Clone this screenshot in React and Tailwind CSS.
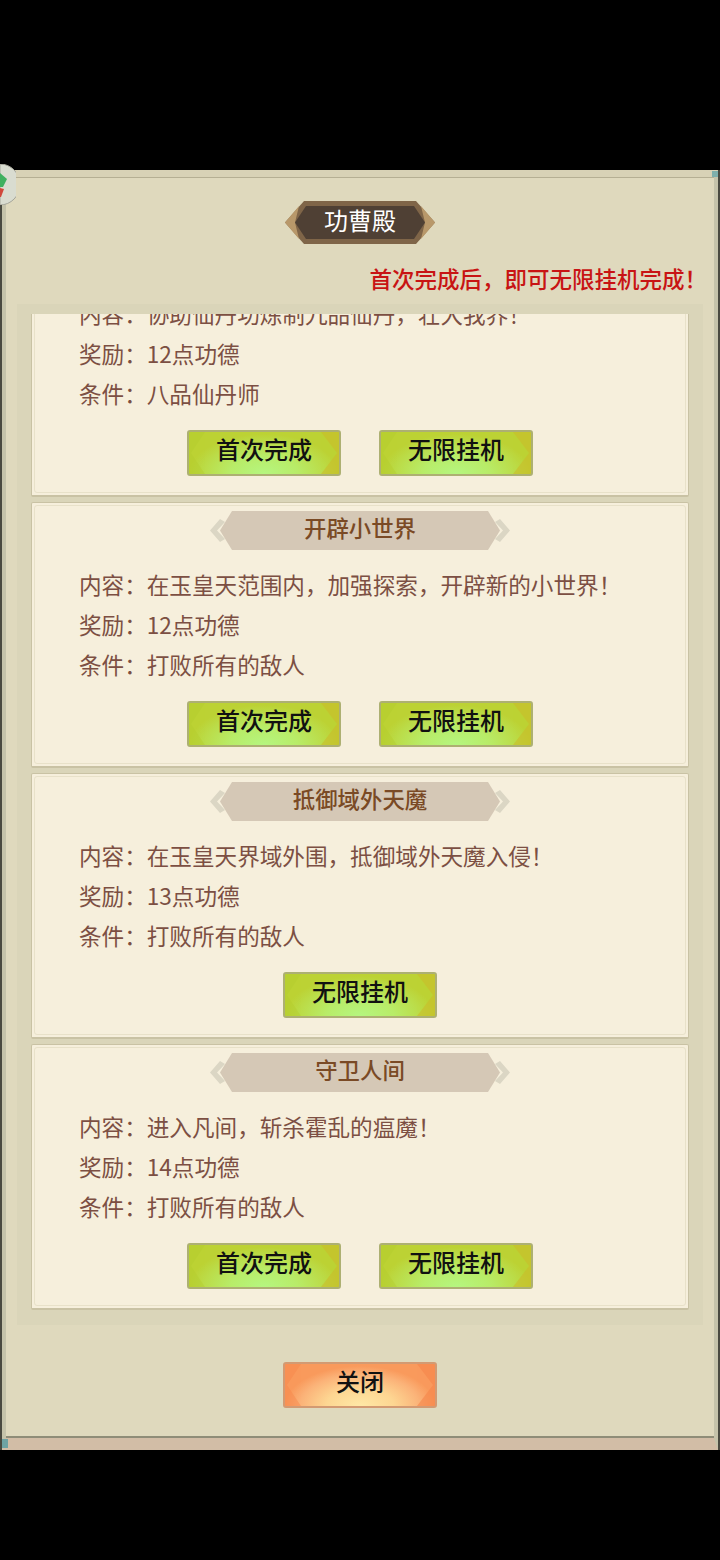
const cards = [
  {
    content: "协助仙丹功炼制九品仙丹，壮大我界！",
    reward: "12点功德",
    need: "八品仙丹师",
    first: true,
  },
  {
    title: "开辟小世界",
    content: "在玉皇天范围内，加强探索，开辟新的小世界！",
    reward: "12点功德",
    need: "打败所有的敌人",
    first: true,
  },
  {
    title: "抵御域外天魔",
    content: "在玉皇天界域外围，抵御域外天魔入侵！",
    reward: "13点功德",
    need: "打败所有的敌人",
    first: false,
  },
  {
    title: "守卫人间",
    content: "进入凡间，斩杀霍乱的瘟魔！",
    reward: "14点功德",
    need: "打败所有的敌人",
    first: true,
  },
];

const font = "font-['Noto_Sans_CJK_SC','Noto_Sans',sans-serif]";

function GameButton({ label, orange }) {
  return (
    <button
      className={`relative flex h-[46px] w-[154px] items-center justify-center overflow-hidden rounded-[3px] border-2 text-[24px] font-medium text-[#111] ${
        orange
          ? "border-[#d39a72] bg-[radial-gradient(ellipse_50%_95%_at_50%_100%,#ffe8a6_0%,#fdd692_45%,#fbb278_80%,#f99a5c_100%)]"
          : "border-[#adb072] bg-[radial-gradient(ellipse_50%_95%_at_50%_100%,#b5f680_0%,#b8ec68_45%,#bbdc48_80%,#bcd234_100%)]"
      }`}
    >
      {/* corner facets */}
      <svg className="absolute inset-0 h-full w-full" viewBox="0 0 150 42" preserveAspectRatio="none">
        <g fill={orange ? "#f6854a" : "#b4cd2e"} opacity="0.45">
          <polygon points="0,0 16,0 2,21 0,21" />
          <polygon points="0,42 16,42 2,21 0,21" />
        </g>
        <g fill={orange ? "#f6854a" : "#cabd2a"} opacity="0.6">
          <polygon points="150,0 132,0 148,21 150,21" />
          <polygon points="150,42 132,42 148,21 150,21" />
        </g>
      </svg>
      <span className="relative pb-[8px] leading-none">{label}</span>
    </button>
  );
}

function TitleBanner({ title }) {
  return (
    <div className="relative mx-auto flex h-[39px] w-[304px] items-center justify-center">
      <svg className="absolute inset-0 h-full w-full" viewBox="0 0 304 39">
        <polygon points="24,0 280,0 292,19.5 280,39 24,39 12,19.5" fill="#d5c8b6" />
        <path d="M12,8 L2,19.5 L12,31 L17,28 L9,19.5 L17,11 Z" fill="#dbd6c4" />
        <path d="M292,8 L302,19.5 L292,31 L287,28 L295,19.5 L287,11 Z" fill="#dbd6c4" />
      </svg>
      {title && (
        <span className="relative pb-[6px] text-[22.4px] leading-none font-medium text-[#7a4a25]">{title}</span>
      )}
    </div>
  );
}

function Card({ card }) {
  return (
    <div className="flex h-[266px] w-[658px] shrink-0 flex-col rounded-[2px] border border-b-2 border-[#c9c2a4] bg-[#f6efdc] p-[2px]">
      <div className="flex h-full flex-col rounded-[3px] border border-[#e8e1c9] pt-[5px]">
        <TitleBanner title={card.title} />
        <div className="mt-[19px] flex flex-col gap-[8px] pl-[44px] text-[22.6px] leading-[32px] text-[#7c4f43]">
          <p>内容：{card.content}</p>
          <p>奖励：{card.reward}</p>
          <p>条件：{card.need}</p>
        </div>
        <div className="mt-[20px] flex justify-center gap-[38px]">
          {card.first && <GameButton label="首次完成" />}
          <GameButton label="无限挂机" />
        </div>
      </div>
    </div>
  );
}

export default function App() {
  return (
    <div className={`flex h-[1560px] w-[720px] flex-col overflow-hidden bg-black pt-[170px] ${font}`}>
      <div className="border-x-2 border-x-[#4a4a40]">
        <div className="relative flex h-[1280px] flex-col border-x-[4px] border-t-[7px] border-b-[12px] border-x-[#c5c3aa] border-t-[#d8d2b6] border-b-[#d2bda6] bg-[#dfd9bd] shadow-[inset_0_1px_0_#b5af93,inset_0_-2px_0_#8f8d78]">
          {/* small orb stuck on the corner */}
          <svg className="absolute top-[-13px] left-[-6px] h-[41px] w-[16px]" viewBox="0 0 16 41">
            <path d="M0,0 A20,20.5 0 0 1 0,41 Z" fill="#d9dcd0" stroke="#a5a59a" strokeWidth="1" />
            <path d="M0,9 L7,15 L3,23 L0,23 Z" fill="#3fb060" />
            <path d="M0,24 L4,25 L1,33 L0,33 Z" fill="#d0483c" />
          </svg>
          {/* teal corner studs */}
          <div className="absolute top-[-6px] right-[-4px] h-[6px] w-[6px] bg-[#7fb0ac]" />
          <div className="absolute bottom-[-10px] left-[-4px] h-[9px] w-[6px] bg-[#6fa3a3]" />

          {/* title */}
          <div className="mt-[24px] flex justify-center">
            <div className="relative flex h-[43px] w-[150px] items-center justify-center">
              <svg className="absolute inset-0 h-full w-full" viewBox="0 0 150 43">
                <polygon points="19,0 131,0 150,21.5 131,43 19,43 0,21.5" fill="#7f6548" />
                <path d="M0,21.5 L14,5 L10,21.5 L14,38 Z" fill="#b8986a" />
                <path d="M150,21.5 L136,5 L140,21.5 L136,38 Z" fill="#b8986a" />
                <polygon points="21,5 129,5 140,21.5 129,38 21,38 10,21.5" fill="#4f4034" />
              </svg>
              <span className="relative pb-[6px] text-[24px] leading-none text-white">功曹殿</span>
            </div>
          </div>

          {/* notice */}
          <p className="mt-[17px] pr-[7px] text-right text-[22.5px] leading-[34px] font-medium text-[#c81414]">
            首次完成后，即可无限挂机完成！
          </p>

          {/* scrolling list */}
          <div className="mx-[11px] mt-[9px] flex h-[1021px] flex-col bg-[#dad5b9] px-[14px] pt-[10px]">
            <div className="flex h-[996px] flex-col justify-end gap-[5px] overflow-hidden">
              {cards.map((card) => (
                <Card key={card.content} card={card} />
              ))}
            </div>
          </div>

          <div className="mt-[37px] flex justify-center">
            <GameButton label="关闭" orange />
          </div>
        </div>
      </div>
    </div>
  );
}
